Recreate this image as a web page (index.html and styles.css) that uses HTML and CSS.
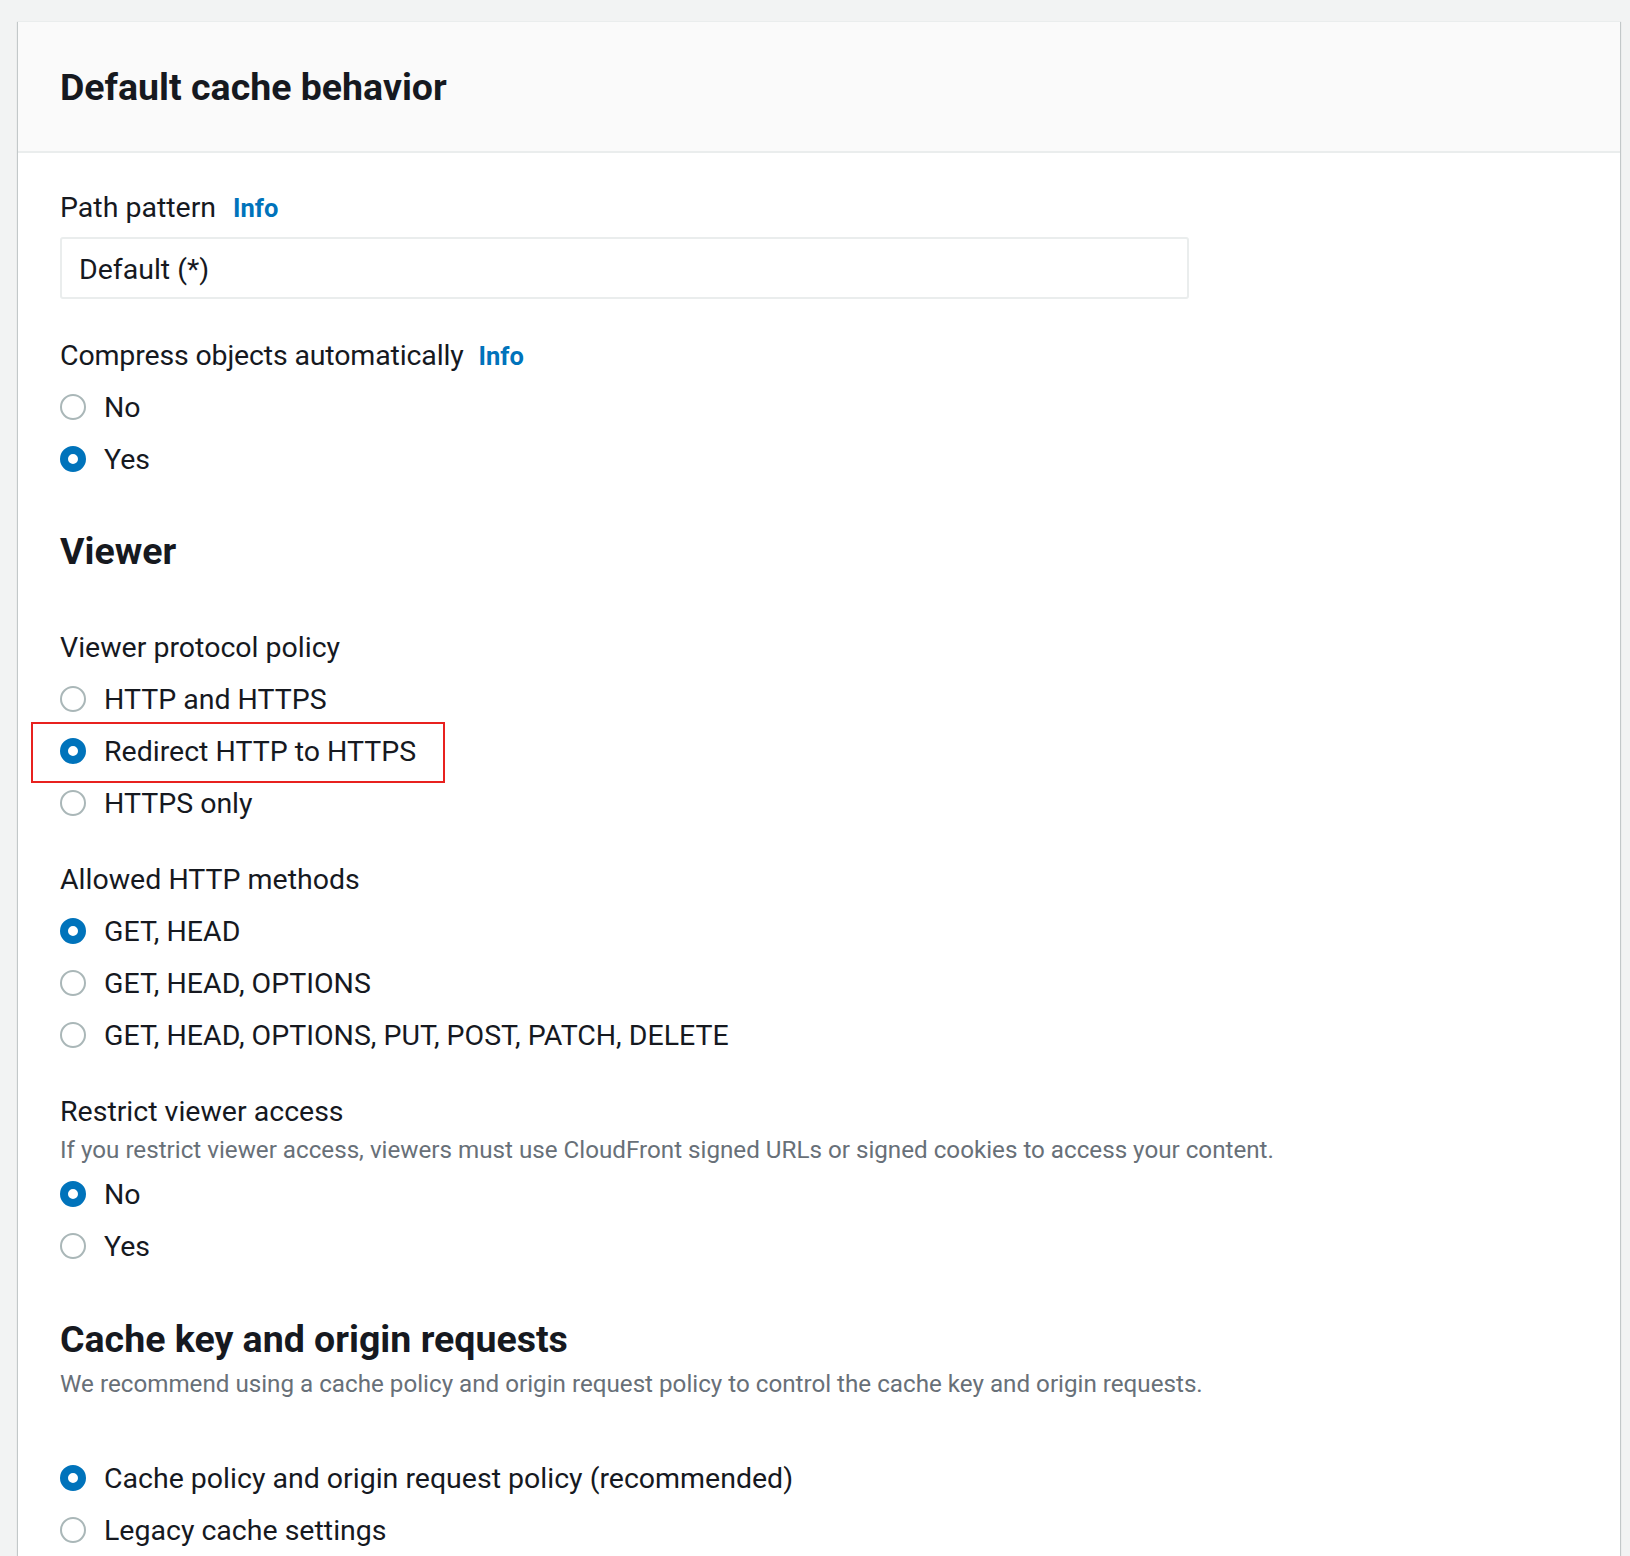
FILE: index.html
```html
<!DOCTYPE html>
<html lang="en">
<head>
<meta charset="utf-8">
<title>Default cache behavior</title>
<link rel="stylesheet" href="styles.css">
</head>
<body>
<div class="page">
  <section class="card">
    <header class="card-header">
      <h2 class="card-title">Default cache behavior</h2>
    </header>
    <div class="card-body">
      <div class="field">
        <div class="label">Path pattern <a class="info" href="#">Info</a></div>
        <div class="input">Default (*)</div>
      </div>

      <div class="field field-compress">
        <div class="label label-compress">Compress objects automatically <a class="info" href="#">Info</a></div>
        <div class="radios">
          <label class="radio"><span class="dot"></span><span>No</span></label>
          <label class="radio"><span class="dot on"></span><span>Yes</span></label>
        </div>
      </div>

      <h3 class="section-title sec-viewer">Viewer</h3>

      <div class="field field-protocol">
        <div class="label">Viewer protocol policy</div>
        <div class="radios">
          <label class="radio"><span class="dot"></span><span>HTTP and HTTPS</span></label>
          <label class="radio"><span class="dot on"></span><span>Redirect HTTP to HTTPS</span></label>
          <label class="radio"><span class="dot"></span><span>HTTPS only</span></label>
        </div>
      </div>

      <div class="field field-group">
        <div class="label">Allowed HTTP methods</div>
        <div class="radios">
          <label class="radio"><span class="dot on"></span><span>GET, HEAD</span></label>
          <label class="radio"><span class="dot"></span><span>GET, HEAD, OPTIONS</span></label>
          <label class="radio"><span class="dot"></span><span>GET, HEAD, OPTIONS, PUT, POST, PATCH, DELETE</span></label>
        </div>
      </div>

      <div class="field field-group">
        <div class="label">Restrict viewer access</div>
        <div class="desc">If you restrict viewer access, viewers must use CloudFront signed URLs or signed cookies to access your content.</div>
        <div class="radios radios-tight">
          <label class="radio"><span class="dot on"></span><span>No</span></label>
          <label class="radio"><span class="dot"></span><span>Yes</span></label>
        </div>
      </div>

      <h3 class="section-title sec-cache">Cache key and origin requests</h3>
      <div class="desc section-desc">We recommend using a cache policy and origin request policy to control the cache key and origin requests.</div>
      <div class="radios radios-cache">
        <label class="radio"><span class="dot on"></span><span>Cache policy and origin request policy (recommended)</span></label>
        <label class="radio"><span class="dot"></span><span>Legacy cache settings</span></label>
      </div>
    </div>
  </section>
  <div class="highlight"></div>
</div>
</body>
</html>
```

FILE: styles.css
```css
html, body {
  margin: 0;
  padding: 0;
  background: #f2f3f3;
  height: 1556px;
  overflow: hidden;
}

body {
  font-family: Roboto, "Liberation Sans", Arial, sans-serif;
  color: #16191f;
}

.page {
  position: relative;
  padding: 21px 10px 0 18px;
}

.card {
  background: #ffffff;
  box-shadow: 0 1px 1px 0 rgba(0, 28, 36, 0.3), 1px 1px 1px 0 rgba(0, 28, 36, 0.15), -1px 1px 1px 0 rgba(0, 28, 36, 0.15);
  border-top: 1px solid #eaeded;
  min-height: 1600px;
}

.card-header {
  height: 129px;
  background: #fafafa;
  border-bottom: 2px solid #eaeded;
  display: flex;
  align-items: center;
  padding-left: 42px;
}

.card-title {
  margin: 0;
  font-size: 37.5px;
  line-height: 50px;
  font-weight: 700;
  color: #16191f;
}

.card-body {
  padding: 33px 0 0 42px;
}

.label {
  font-size: 28.5px;
  line-height: 44px;
  display: flex;
  align-items: baseline;
  gap: 17px;
}

.label-compress {
  letter-spacing: -0.15px;
  gap: 15px;
}

.info {
  color: #0073bb;
  font-weight: 700;
  font-size: 25.5px;
  letter-spacing: 0;
  text-decoration: none;
}

.input {
  margin-top: 7px;
  width: 1129px;
  height: 62px;
  box-sizing: border-box;
  border: 2px solid #eaeded;
  border-radius: 3px;
  padding: 3px 0 0 17px;
  font-size: 28.5px;
  line-height: 55px;
}

.field-compress {
  margin-top: 35px;
}

.radios {
  margin-top: 3px;
  display: flex;
  flex-direction: column;
}

.radio {
  height: 52px;
  display: flex;
  align-items: center;
  gap: 18px;
  font-size: 28.5px;
}

.dot {
  width: 26px;
  height: 26px;
  box-sizing: border-box;
  border-radius: 50%;
  border: 2px solid #aab7b8;
  background: #fff;
  flex: none;
}

.dot.on {
  border: 8.5px solid #0073bb;
}

.section-title {
  margin: 0;
  font-size: 37.5px;
  line-height: 50px;
  font-weight: 700;
}

.sec-viewer {
  margin-top: 41px;
}

.field-protocol {
  margin-top: 50px;
}

.field-protocol .radios {
  margin-top: 3px;
}

.field-group {
  margin-top: 29px;
}

.field-group .radios {
  margin-top: 3px;
}

.field-group .radios-tight {
  margin-top: 1px;
}

.desc {
  font-size: 24.2px;
  line-height: 34px;
  color: #687078;
}

.field-group .desc {
  margin-top: -1px;
  margin-bottom: 1px;
}

.sec-cache {
  margin-top: 42px;
}

.section-desc {
  margin-top: 3px;
}

.radios-cache {
  margin-top: 51px;
}

.highlight {
  position: absolute;
  left: 31px;
  top: 722px;
  width: 414px;
  height: 61px;
  box-sizing: border-box;
  border: 2px solid #e8211f;
}
```
